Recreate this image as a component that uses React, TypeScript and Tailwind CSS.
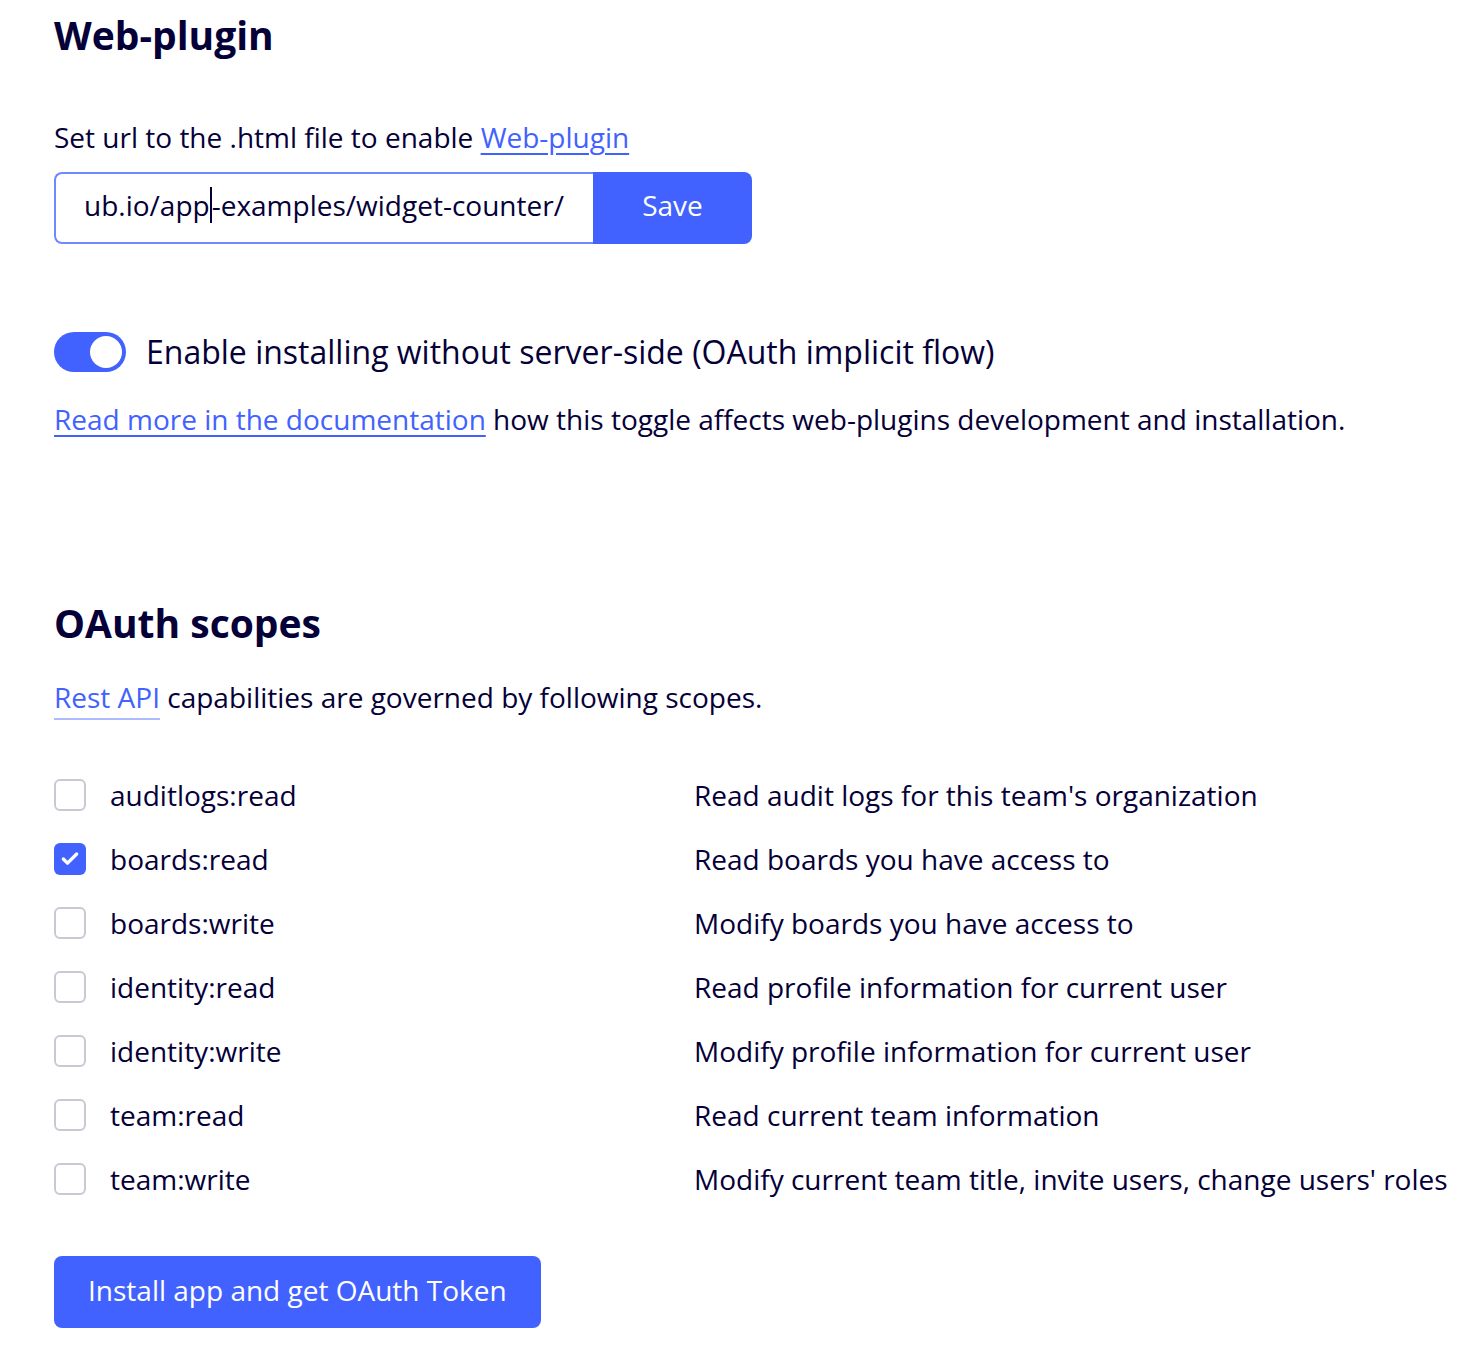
import { Check } from 'lucide-react';

const scopes = [
  { name: 'auditlogs:read', desc: "Read audit logs for this team's organization", checked: false },
  { name: 'boards:read', desc: 'Read boards you have access to', checked: true },
  { name: 'boards:write', desc: 'Modify boards you have access to', checked: false },
  { name: 'identity:read', desc: 'Read profile information for current user', checked: false },
  { name: 'identity:write', desc: 'Modify profile information for current user', checked: false },
  { name: 'team:read', desc: 'Read current team information', checked: false },
  { name: 'team:write', desc: "Modify current team title, invite users, change users' roles", checked: false },
];

function ScopeRow({ name, desc, checked }: { name: string; desc: string; checked: boolean }) {
  return (
    <div className="flex items-center h-[64px] whitespace-nowrap">
      <div className="flex items-center w-[640px] shrink-0">
        {checked ? (
          <span className="w-[32px] h-[32px] rounded-[6px] bg-[#4262ff] flex items-center justify-center">
            <Check className="w-[20px] h-[20px] text-white" strokeWidth={4} />
          </span>
        ) : (
          <span className="w-[32px] h-[32px] rounded-[6px] border-2 border-[#c9c8d4] bg-white" />
        )}
        <span className="ml-[24px] text-[28px] leading-[40px]">{name}</span>
      </div>
      <span className="text-[28px] leading-[40px]">{desc}</span>
    </div>
  );
}

export default function App() {
  return (
    <div
      className="min-h-[1348px] bg-white px-[54px] pt-[11px] text-[#050038]"
      style={{ fontFamily: '"Open Sans", "Noto Sans", sans-serif' }}
    >
      {/* Web-plugin */}
      <h1 className="text-[39px] leading-[48px] font-bold">Web-plugin</h1>
      <p className="mt-[58px] text-[28px] leading-[40px]">
        Set url to the .html file to enable{' '}
        <a href="#" className="text-[#4262ff] underline underline-offset-[5px]">
          Web-plugin
        </a>
      </p>

      <div className="mt-[15px] flex h-[72px] w-[698px]">
        <div className="flex-1 flex items-center overflow-hidden rounded-l-[8px] border-2 border-r-0 border-[#7189ff] pl-[28px] pb-[6px] text-[28px] whitespace-nowrap">
          <span>ub.io/app</span>
          <span className="inline-block w-[2px] h-[36px] bg-[#050038]" />
          <span>-examples/widget-counter/</span>
        </div>
        <button className="w-[159px] rounded-r-[8px] bg-[#4262ff] pb-[6px] text-white text-[28px]">Save</button>
      </div>

      {/* Toggle */}
      <div className="mt-[86px] flex items-center">
        <div className="relative w-[72px] h-[40px] rounded-full bg-[#4262ff]">
          <span className="absolute right-[4px] top-[4px] w-[32px] h-[32px] rounded-full bg-white" />
        </div>
        <span className="ml-[20px] text-[32px] leading-[44px]">
          Enable installing without server-side (OAuth implicit flow)
        </span>
      </div>
      <p className="mt-[25px] text-[28px] leading-[40px]">
        <a href="#" className="text-[#4262ff] underline underline-offset-[5px]">
          Read more in the documentation
        </a>{' '}
        how this toggle affects web-plugins development and installation.
      </p>

      {/* OAuth scopes */}
      <h2 className="mt-[160px] text-[39px] leading-[48px] font-bold">OAuth scopes</h2>
      <p className="mt-[30px] text-[28px] leading-[40px]">
        <a href="#" className="text-[#4262ff] border-b-2 border-[#aebcff] pb-[2px]">
          Rest API
        </a>{' '}
        capabilities are governed by following scopes.
      </p>

      <div className="mt-[46px]">
        {scopes.map((s) => (
          <ScopeRow key={s.name} {...s} />
        ))}
      </div>

      <button className="mt-[45px] h-[72px] px-[34px] pb-[5px] rounded-[8px] bg-[#4262ff] text-white text-[28px]">
        Install app and get OAuth Token
      </button>
    </div>
  );
}
